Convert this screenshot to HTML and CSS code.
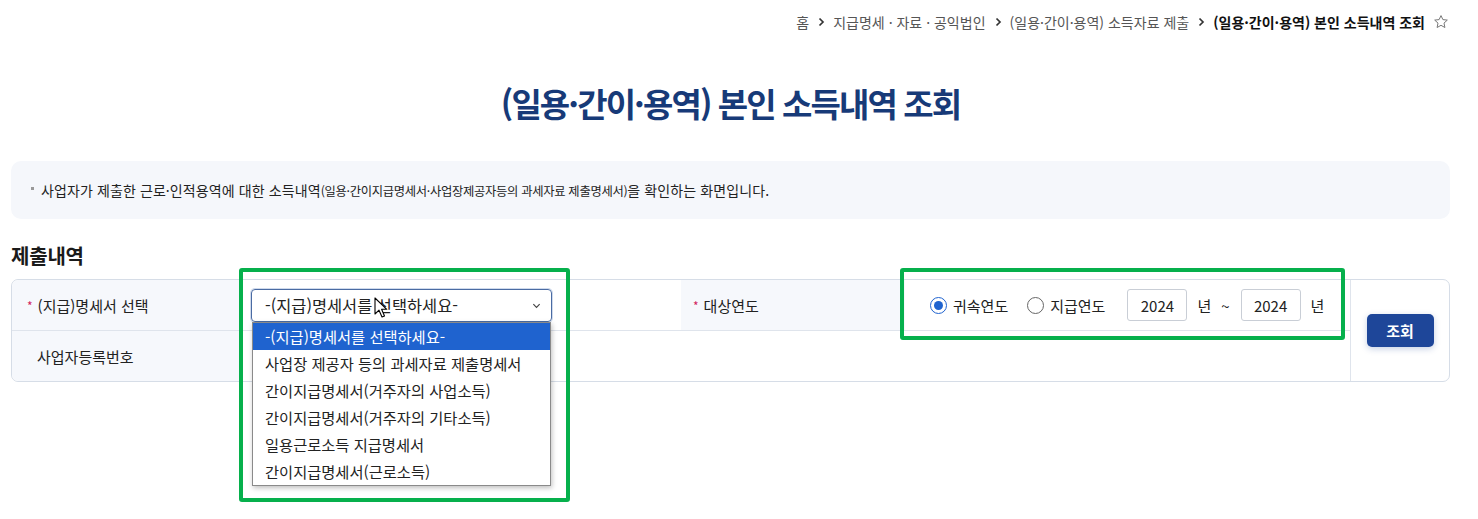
FILE: index.html
```html
<!DOCTYPE html>
<html lang="ko">
<head>
<meta charset="utf-8">
<title>(일용·간이·용역) 본인 소득내역 조회</title>
<link rel="stylesheet" href="styles.css">
</head>
<body>
<div class="page">
  <nav class="breadcrumb">
    <span class="crumb">홈</span>
    <svg class="sep" viewBox="0 0 8 10" width="8" height="10"><path d="M2.5 1.5 L6 5 L2.5 8.5" fill="none" stroke="#333" stroke-width="1.7"/></svg>
    <span class="crumb">지급명세 · 자료 · 공익법인</span>
    <svg class="sep" viewBox="0 0 8 10" width="8" height="10"><path d="M2.5 1.5 L6 5 L2.5 8.5" fill="none" stroke="#333" stroke-width="1.7"/></svg>
    <span class="crumb">(일용·간이·용역) 소득자료 제출</span>
    <svg class="sep" viewBox="0 0 8 10" width="8" height="10"><path d="M2.5 1.5 L6 5 L2.5 8.5" fill="none" stroke="#333" stroke-width="1.7"/></svg>
    <span class="crumb current">(일용·간이·용역) 본인 소득내역 조회</span>
    <svg class="star" viewBox="0 0 16 16" width="16" height="16"><path d="M8 1.6 L9.9 5.6 L14.3 6.1 L11 9.1 L11.9 13.5 L8 11.3 L4.1 13.5 L5 9.1 L1.7 6.1 L6.1 5.6 Z" fill="none" stroke="#777" stroke-width="1" stroke-linejoin="round"/></svg>
  </nav>

  <h1 class="title">(일용·간이·용역) 본인 소득내역 조회</h1>

  <div class="info">
    <span class="dot"></span>
    <p>사업자가 제출한 근로·인적용역에 대한 소득내역<small>(일용·간이지급명세서·사업장제공자등의 과세자료 제출명세서)</small>을 확인하는 화면입니다.</p>
  </div>

  <h2 class="section">제출내역</h2>

  <div class="table">
    <div class="label r1"><span class="req">*</span>(지급)명세서 선택</div>
    <div class="value r1 selcell">
      <div class="select">
        <span>-(지급)명세서를 선택하세요-</span>
        <svg class="chev" viewBox="0 0 10 6" width="9" height="6"><path d="M1.5 1 L5 4.5 L8.5 1" fill="none" stroke="#444" stroke-width="1.3"/></svg>
      </div>
      <ul class="dropdown">
        <li class="active">-(지급)명세서를 선택하세요-</li>
        <li>사업장 제공자 등의 과세자료 제출명세서</li>
        <li>간이지급명세서(거주자의 사업소득)</li>
        <li>간이지급명세서(거주자의 기타소득)</li>
        <li>일용근로소득 지급명세서</li>
        <li>간이지급명세서(근로소득)</li>
      </ul>
      <svg class="cursor" viewBox="0 0 14 22" width="14" height="22"><path d="M1 1 L1 17 L5 13.2 L8 20 L10.5 19 L7.6 12.3 L12.8 12.3 Z" fill="#fff" stroke="#000" stroke-width="1.1" stroke-linejoin="round"/></svg>
    </div>
    <div class="label r1 lab2"><span class="req">*</span>대상연도</div>
    <div class="value r1 years">
      <label class="radio checked"><span class="circle"></span>귀속연도</label>
      <label class="radio"><span class="circle"></span>지급연도</label>
      <span class="ybox">2024</span>
      <span class="unit">년</span>
      <span class="tilde">~</span>
      <span class="ybox">2024</span>
      <span class="unit">년</span>
    </div>
    <div class="btncell"><button class="btn">조회</button></div>
    <div class="label r2 plain">사업자등록번호</div>
    <div class="value r2 wide"></div>
  </div>

  <div class="mark mark1"></div>
  <div class="mark mark2"></div>
</div>
</body>
</html>
```

FILE: styles.css
```css
* { box-sizing: border-box; }
html, body { margin: 0; padding: 0; background: #fff; }
body {
  font-family: "Noto Sans CJK KR", "Noto Sans", sans-serif;
  color: #222;
}
.page {
  position: relative;
  width: 1478px;
  min-height: 519px;
  padding: 0 28px 0 11px;
}
.breadcrumb {
  height: 44px;
  display: flex;
  justify-content: flex-end;
  align-items: center;
  gap: 8px;
  font-size: 14px;
  color: #555;
  padding-right: 1px;
}
.breadcrumb .sep { margin: 0; }
.breadcrumb .current { color: #111; font-weight: 700; }

.title {
  margin: 35px 0 0;
  height: 48px;
  line-height: 48px;
  text-align: center;
  font-size: 33px;
  font-weight: 700;
  letter-spacing: -1.9px;
  color: #173a78;
}

.info {
  margin-top: 34px;
  height: 58px;
  border-radius: 10px;
  background: #f5f7fb;
  display: flex;
  align-items: center;
  padding-left: 20px;
}
.info .dot {
  width: 3px; height: 3px;
  background: #999;
  margin-right: 7px;
  margin-top: -4px;
}
.info p {
  margin: 0;
  font-size: 14px;
  color: #222;
  letter-spacing: 0.1px;
}
.info small { font-size: 12.3px; letter-spacing: -0.3px; }

.section {
  margin: 24px 0 0;
  height: 26px;
  line-height: 26px;
  font-size: 20px;
  font-weight: 700;
  letter-spacing: -0.2px;
  color: #1a1a1a;
}

.table {
  margin-top: 10px;
  height: 103px;
  border: 1px solid #d6dde7;
  border-radius: 7px;
  display: grid;
  grid-template-columns: 228px 441px 224px 445px 1fr;
  grid-template-rows: 51px 50px;
}
.label {
  background: #f6f8fc;
  display: flex;
  align-items: center;
  font-size: 15px;
  color: #222;
  padding-left: 15px;
}
.label.plain { padding-left: 25px; border-bottom-left-radius: 7px; }
.label.r1:first-child { border-top-left-radius: 7px; }
.r1 { border-bottom: 1px solid #dfe4ec; }
.req { color: #d2245e; font-size: 12px; margin-right: 5px; }
.value { background: #fff; display: flex; align-items: center; }
.label.r2 { grid-column: 1; grid-row: 2; }
.value.wide { grid-column: 2 / 5; grid-row: 2; }
.lab2 { padding-left: 12px; }

.selcell { position: relative; padding-left: 11px; }
.select {
  width: 301px;
  height: 33px;
  border: 1px solid #4a6ba3;
  border-radius: 4px;
  box-shadow: 0 0 0 1px #cfdaec;
  display: flex;
  align-items: center;
  justify-content: space-between;
  padding: 0 10px 0 13px;
  font-size: 16.4px;
  color: #222;
}
.chev { margin-top: 1px; }
.dropdown {
  position: absolute;
  left: 12px;
  top: 42px;
  width: 299px;
  margin: 0;
  padding: 0;
  list-style: none;
  background: #fff;
  border: 1px solid #8a8a8a;
  box-shadow: 1px 2px 5px rgba(0,0,0,0.25);
  z-index: 5;
}
.dropdown li {
  height: 27px;
  line-height: 27px;
  padding-left: 12px;
  font-size: 15.3px;
  color: #222;
  white-space: nowrap;
}
.dropdown li.active { background: #1f63cf; color: #fff; }
.cursor { position: absolute; left: 134px; top: 17px; z-index: 6; }

.years { padding-left: 25px; font-size: 15px; }
.radio { display: flex; align-items: center; margin-right: 19px; }
.radio .circle {
  width: 17px; height: 17px;
  border: 1px solid #666;
  border-radius: 50%;
  margin-right: 6px;
  display: flex; align-items: center; justify-content: center;
}
.radio.checked .circle { border-color: #1f63cf; }
.radio.checked .circle::after {
  content: "";
  width: 9px; height: 9px;
  border-radius: 50%;
  background: #1f63cf;
}
.radio:nth-child(2) { margin-right: 22px; }
.ybox {
  width: 60px; height: 32px;
  border: 1px solid #c9ced6;
  border-radius: 3px;
  display: flex; align-items: center; justify-content: center;
  font-size: 15px;
  color: #222;
}
.unit { margin: 0 10px 0 10px; }
.tilde { margin-right: 11px; }

.btncell {
  grid-column: 5;
  grid-row: 1 / 3;
  border-left: 1px solid #dfe4ec;
  display: flex; align-items: center; justify-content: center;
}
.btn {
  width: 67px; height: 33px;
  border: none;
  border-radius: 5px;
  background: #1e4699;
  color: #fff;
  font-family: inherit;
  font-size: 15px;
  font-weight: 700;
  box-shadow: 0 2px 6px rgba(30,70,153,0.25);
}

.mark {
  position: absolute;
  border: 4px solid #06b04c;
  border-radius: 3px;
  z-index: 10;
  pointer-events: none;
}
.mark1 { left: 239px; top: 268px; width: 331px; height: 234px; }
.mark2 { left: 900px; top: 268px; width: 445px; height: 72px; }
```
